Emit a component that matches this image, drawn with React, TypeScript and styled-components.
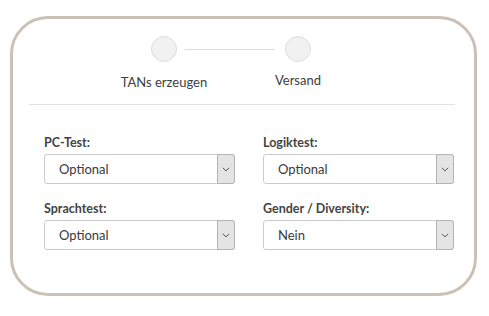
import React from "react";
import styled, { createGlobalStyle } from "styled-components";

const GlobalStyle = createGlobalStyle`
  body {
    margin: 0;
    background: #ffffff;
    font-family: Lato, "Liberation Sans", sans-serif;
  }
`;

const Page = styled.div`
  padding: 16px 0 0 10px;
`;

const Card = styled.div`
  box-sizing: border-box;
  width: 467px;
  height: 280px;
  border: 3px solid #cbc1b6;
  border-radius: 38px;
  padding-top: 17px;
`;

const Stepper = styled.div`
  display: grid;
  grid-template-columns: 134px 134px;
  margin-left: 84px;
  height: 68px;
`;

const Step = styled.div<{ $raise?: number }>`
  position: relative;
  display: flex;
  flex-direction: column;
  align-items: center;

  span {
    margin-top: ${(p) => 12 - (p.$raise || 0)}px;
    font-size: 13px;
    line-height: 16px;
    color: #3d3d3d;
  }

  &:first-child::after {
    content: "";
    position: absolute;
    top: 13px;
    left: 88px;
    width: 90px;
    height: 1px;
    background: #dcdcdc;
  }
`;

const Dot = styled.div`
  box-sizing: border-box;
  width: 26px;
  height: 26px;
  border-radius: 50%;
  background: #f1f1f1;
  border: 1px solid #dedede;
`;

const Divider = styled.hr`
  border: 0;
  height: 1px;
  background: #e2e2e2;
  margin: 0 19px 0 16px;
`;

const Form = styled.div`
  display: grid;
  grid-template-columns: 191px 191px;
  column-gap: 28px;
  row-gap: 17px;
  margin: 30px 0 0 31px;
`;

const Field = styled.div`
  display: flex;
  flex-direction: column;
`;

const Label = styled.label`
  font-size: 12.5px;
  line-height: 15px;
  font-weight: 700;
  color: #444444;
  margin-bottom: 4px;
`;

const SelectBox = styled.div`
  box-sizing: border-box;
  display: flex;
  height: 30px;
  border: 1px solid #cccccc;
  border-radius: 3px;
  background: #ffffff;
`;

const Value = styled.div`
  flex: 1;
  padding-left: 14px;
  font-size: 13px;
  line-height: 28px;
  color: #3a3a3a;
`;

const ArrowButton = styled.div`
  box-sizing: border-box;
  width: 18px;
  margin: -1px -1px -1px 0;
  display: flex;
  align-items: center;
  justify-content: center;
  background: #e4e4e4;
  border: 1px solid #b3b3b3;
  border-radius: 0 3px 3px 0;
`;

const Chevron = () => (
  <svg width="8" height="5" viewBox="0 0 8 5">
    <path d="M0.8 0.8 L4 3.9 L7.2 0.8" fill="none" stroke="#555" strokeWidth="1" />
  </svg>
);

const Select = ({ label, value }: { label: string; value: string }) => (
  <Field>
    <Label>{label}</Label>
    <SelectBox>
      <Value>{value}</Value>
      <ArrowButton>
        <Chevron />
      </ArrowButton>
    </SelectBox>
  </Field>
);

export default function App() {
  return (
    <Page>
      <GlobalStyle />
      <Card>
        <Stepper>
          <Step>
            <Dot />
            <span>TANs erzeugen</span>
          </Step>
          <Step $raise={2}>
            <Dot />
            <span>Versand</span>
          </Step>
        </Stepper>
        <Divider />
        <Form>
          <Select label="PC-Test:" value="Optional" />
          <Select label="Logiktest:" value="Optional" />
          <Select label="Sprachtest:" value="Optional" />
          <Select label="Gender / Diversity:" value="Nein" />
        </Form>
      </Card>
    </Page>
  );
}
